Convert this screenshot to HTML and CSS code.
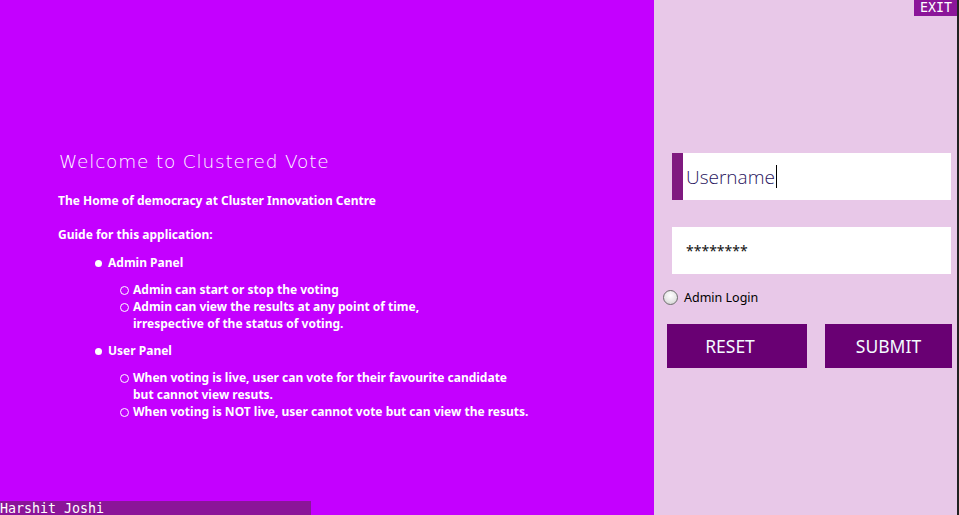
FILE: index.html
```html
<!DOCTYPE html>
<html>
<head>
<meta charset="utf-8">
<link rel="stylesheet" href="styles.css">
</head>
<body>
<div class="app">
  <section class="intro">
    <div class="intro-body">
      <h1 class="title">Welcome to Clustered Vote</h1>
      <p class="tagline">The Home of democracy at Cluster Innovation Centre</p>
      <p class="guide">Guide for this application:</p>
      <ul class="panels">
        <li class="panel">
          <div class="panel-name"><span class="dot"></span>Admin Panel</div>
          <ul class="points">
            <li class="point"><span class="ring"></span><span>Admin can start or stop the voting</span></li>
            <li class="point"><span class="ring"></span><span>Admin can view the results at any point of time,<br>irrespective of the status of voting.</span></li>
          </ul>
        </li>
        <li class="panel">
          <div class="panel-name"><span class="dot"></span>User Panel</div>
          <ul class="points">
            <li class="point"><span class="ring"></span><span>When voting is live, user can vote for their favourite candidate<br>but cannot view resuts.</span></li>
            <li class="point"><span class="ring"></span><span>When voting is NOT live, user cannot vote but can view the resuts.</span></li>
          </ul>
        </li>
      </ul>
    </div>
    <div class="author">Harshit Joshi</div>
  </section>
  <section class="login">
    <div class="exit-row"><span class="exit">EXIT</span></div>
    <div class="form">
      <div class="field field-active"><span class="accent"></span><span class="user-text">Username</span><span class="caret"></span></div>
      <div class="field field-pass"><span class="pass-text">********</span></div>
      <label class="radio-row"><span class="radio"></span><span class="radio-label">Admin Login</span></label>
      <div class="buttons">
        <div class="btn btn-reset">RESET</div>
        <div class="btn btn-submit">SUBMIT</div>
      </div>
    </div>
  </section>
  <div class="edge"></div>
</div>
</body>
</html>
```

FILE: styles.css
```css
html, body {
  margin: 0;
  padding: 0;
  width: 959px;
  height: 515px;
  overflow: hidden;
}
.app {
  display: flex;
  width: 959px;
  height: 515px;
}
.intro {
  width: 654px;
  background: #c400ff;
  display: flex;
  flex-direction: column;
  color: #ffffff;
}
.intro-body {
  padding: 150px 0 0 58px;
  font-family: "Noto Sans", "Open Sans", sans-serif;
}
.title {
  margin: 0;
  font-family: "DejaVu Sans", sans-serif;
  font-weight: 200;
  font-size: 18.5px;
  letter-spacing: 0.8px;
  line-height: 24px;
  padding-left: 1px;
}
.tagline {
  margin: 19px 0 0 0;
  font-weight: 700;
  font-size: 12px;
  line-height: 16px;
}
.guide {
  margin: 18px 0 0 0;
  font-weight: 700;
  font-size: 12px;
  line-height: 16px;
}
.panels {
  list-style: none;
  margin: 12px 0 0 0;
  padding: 0 0 0 37px;
}
.panel {
  margin-bottom: 11px;
}
.panel-name {
  display: flex;
  align-items: center;
  font-weight: 700;
  font-size: 12px;
  line-height: 16px;
}
.dot {
  width: 7px;
  height: 7px;
  border-radius: 50%;
  background: #ffffff;
  margin-right: 6px;
}
.points {
  list-style: none;
  margin: 10px 0 0 0;
  padding: 0 0 0 25px;
}
.point {
  display: flex;
  align-items: flex-start;
  font-weight: 700;
  font-size: 12px;
  line-height: 17px;
}
.ring {
  flex: none;
  width: 7px;
  height: 7px;
  border: 1px solid #ffffff;
  border-radius: 50%;
  margin: 5px 4px 0 0;
}
.author {
  margin-top: auto;
  width: 311px;
  height: 14px;
  background: #8b1599;
  font-family: "DejaVu Sans Mono", monospace;
  font-size: 13.3px;
  line-height: 16px;
  overflow: hidden;
}
.login {
  flex: 1;
  background: #e8c8e8;
  display: flex;
  flex-direction: column;
}
.exit-row {
  display: flex;
  justify-content: flex-end;
}
.exit {
  background: #8b1599;
  color: #ffffff;
  font-family: "DejaVu Sans Mono", monospace;
  font-size: 13.3px;
  line-height: 16px;
  height: 16px;
  padding: 0 5px 0 6px;
}
.form {
  padding: 137px 0 0 9px;
  display: flex;
  flex-direction: column;
}
.field {
  margin-left: 9px;
  width: 279px;
  height: 47px;
  background: #ffffff;
  display: flex;
  align-items: center;
}
.accent {
  width: 11px;
  height: 47px;
  background: #7f1a7f;
  margin-right: 3px;
}
.user-text {
  font-family: "Open Sans", sans-serif;
  font-weight: 300;
  font-size: 19px;
  color: #2a1660;
}
.caret {
  width: 1px;
  height: 23px;
  background: #000000;
  margin-left: 1px;
}
.field-pass {
  margin-top: 27px;
  padding-left: 14px;
  box-sizing: border-box;
}
.pass-text {
  font-family: "Noto Sans", sans-serif;
  font-size: 14px;
  color: #111111;
}
.radio-row {
  display: flex;
  align-items: center;
  margin-top: 15px;
  height: 16px;
}
.radio {
  width: 13px;
  height: 13px;
  border-radius: 50%;
  border: 1px solid #6d6d6d;
  background: radial-gradient(circle at 50% 35%, #ffffff 0%, #e6e6e6 55%, #c9c9c9 100%);
  margin-right: 6px;
}
.radio-label {
  font-family: "Noto Sans", sans-serif;
  font-size: 12.5px;
  color: #000000;
}
.buttons {
  display: flex;
  margin-top: 19px;
  margin-left: 4px;
  gap: 18px;
}
.btn {
  height: 44px;
  background: #690073;
  color: #f4fbff;
  font-family: "Noto Sans", sans-serif;
  font-size: 17.5px;
  display: flex;
  align-items: center;
  justify-content: center;
}
.btn-reset {
  width: 140px;
  box-sizing: border-box;
  padding-right: 14px;
}
.btn-submit {
  width: 127px;
}
.edge {
  width: 2px;
  background: #222222;
}
```
